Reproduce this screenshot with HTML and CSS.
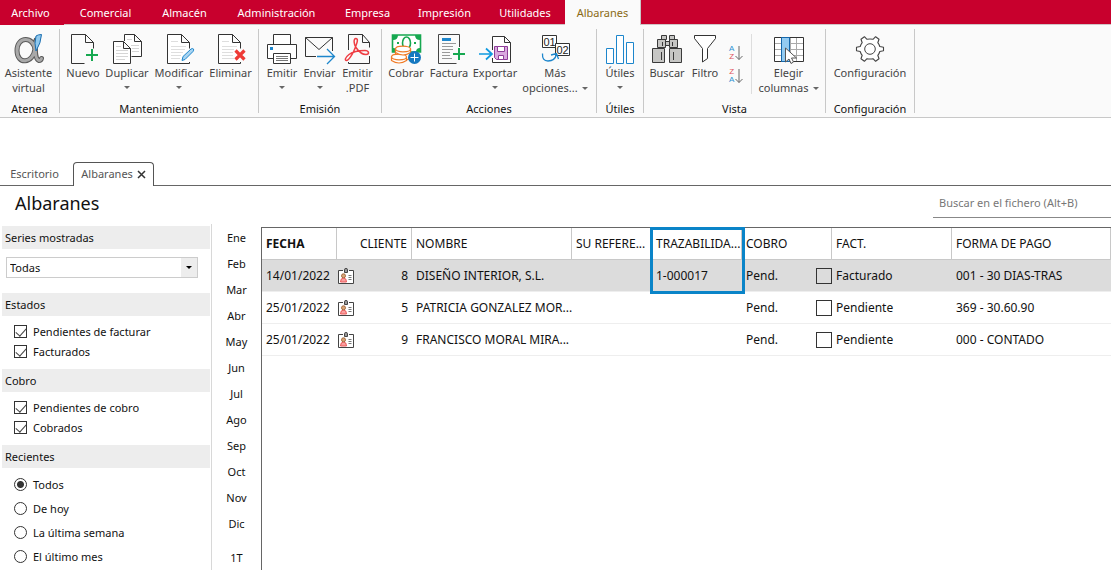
FILE: index.html
```html
<!DOCTYPE html>
<html lang="es">
<head>
<meta charset="utf-8">
<title>Albaranes</title>
<link rel="stylesheet" href="styles.css">
</head>
<body>
<svg class="defs" width="0" height="0" aria-hidden="true">
  <symbol id="card" viewBox="0 0 16 16">
    <path d="M5 2.500H.5v13h15v-13H11" fill="#fff" stroke="#444"/>
    <path d="M6.500 4.500v-3q0-1 1.500-1t1.500 1v3z" fill="#999" stroke="#444"/>
    <path d="M2.500 14q0-4 3-4t3 4z" fill="#f9a0a0" stroke="#ec5a5a"/>
    <circle cx="5.500" cy="7.800" r="2" fill="#d9a679" stroke="#a56a3e"/>
    <path d="M10.500 7.500h3M10.500 9.500h3M10.500 11.500h3" stroke="#777"/>
  </symbol>
</svg>

<nav class="menu">
  <button class="menu-item file">Archivo</button>
  <button class="menu-item">Comercial</button>
  <button class="menu-item">Almacén</button>
  <button class="menu-item">Administración</button>
  <button class="menu-item">Empresa</button>
  <button class="menu-item">Impresión</button>
  <button class="menu-item">Utilidades</button>
  <button class="menu-item active">Albaranes</button>
</nav>

<div class="ribbon">
  <section class="group atenea">
    <div class="tools">
      <button class="tool">
        <svg viewBox="0 0 30 30"><g fill="none" stroke-linecap="round"><path d="M22 6Q20 25 25 26.500q2 0 2.500-2M21 16C20 2 3 2 3 16.500S19 30 21 15" stroke="#5b5b5b" stroke-width="5"/><path d="M22 7Q20 25 25 26.500q2 0 2.500-2M21 16C20 2 3 2 3 16.500S19 30 21 15" stroke="#a9a9a9" stroke-width="3"/></g><path d="M22 2q2-1.500 5.500-1.500Q27 9 22 17q-2-8 0-15z" fill="#8fc8ee" stroke="#1b6fb0"/></svg>
        <span>Asistente<br>virtual</span>
      </button>
    </div>
    <h2>Atenea</h2>
  </section>

  <section class="group mantenimiento">
    <div class="tools">
      <button class="tool">
        <svg viewBox="0 0 30 30"><path d="M16.500 29.500h-13V.5h14l8 8v6M17.500.5v8h8" fill="none" stroke="#333"/><path d="M24 15v12M18 21h12" stroke="#16a850" stroke-width="2"/></svg>
        <span>Nuevo</span>
      </button>
      <button class="tool">
        <svg viewBox="0 0 30 30"><path d="M12.500 7V.5h10l7 7v15h-10M22.500.5v7h7" fill="#fff" stroke="#333"/><path d="M15 5.500h5M19 11.500h8M20 14.500h7M20 17.500h7" stroke="#d5d5d5"/><path d="M1.500 7.500h10l7 7v15h-17zM11.500 7.500v7h7" fill="#fff" stroke="#333"/><path d="M4 12.500h5M4 16.500h12M4 19.500h12M4 22.500h12M4 25.500h9" stroke="#d5d5d5"/></svg>
        <span>Duplicar</span><i class="arrow"></i>
      </button>
      <button class="tool">
        <svg viewBox="0 0 30 30"><path d="M25.500 28v1.500h-22V.5h14l8 8v6M17.500.5v8h8" fill="#fff" stroke="#333"/><path d="M7 7.500h7M7 12.500h15M7 15.500h14M7 18.500h12M7 21.500h10M7 24.500h9" stroke="#dedede"/><path d="M18 26.500l1-4 8-7.500q2-1 2.500 0t-.5 2.500l-8 8z" fill="#a8d4f2" stroke="#1d86cc"/></svg>
        <span>Modificar</span><i class="arrow"></i>
      </button>
      <button class="tool">
        <svg viewBox="0 0 30 30"><path d="M24.500 28v1.500h-22V.5h14l8 8v6M16.500.5v8h8" fill="#fff" stroke="#333"/><path d="M6 7.500h7M6 12.500h15M6 15.500h12M6 18.500h11M6 21.500h11M6 24.500h12" stroke="#dedede"/><path d="M19.500 16.500l9 9M28.500 16.500l-9 9" stroke="#ee3a36" stroke-width="3.200"/></svg>
        <span>Eliminar</span>
      </button>
    </div>
    <h2>Mantenimiento</h2>
  </section>

  <section class="group emision">
    <div class="tools">
      <button class="tool">
        <svg viewBox="0 0 30 30"><path d="M6.500 10.500V.5h17v10M6.500 24.500h-6v-14h29v14h-6M6.500 19.500h17v10h-17z" fill="#fff" stroke="#333"/><path d="M9 22.500h12M9 24.500h12M9 26.500h12" stroke="#777"/><path d="M3 13h3v3H3z" fill="#1d86cc"/></svg>
        <span>Emitir</span><i class="arrow"></i>
      </button>
      <button class="tool">
        <svg viewBox="0 0 30 30"><path d="M11 22.500H.5v-19h27V17M.5 3.500L14 15.500l13.500-12" fill="none" stroke="#333"/><path d="M12 22.500h17.500M22 15l7.500 7.500L22 30" fill="none" stroke="#1d86cc" stroke-width="1.300"/></svg>
        <span>Enviar</span><i class="arrow"></i>
      </button>
      <button class="tool">
        <svg viewBox="0 0 30 30"><path d="M5.500 16V.5h14l7 8v5M26.500 22v7.500h-21V28M19.500.5v8h7" fill="none" stroke="#333"/><path d="M13 4.500c-3 0-2 6 0 9s6 7 10 7 3-4-1-4-12 1-16 4-4.500 6-2.500 6 6-6 8-11 4.500-11 1.500-11z" fill="none" stroke="#ef3d43" stroke-width="1.500"/></svg>
        <span>Emitir<br>.PDF</span>
      </button>
    </div>
    <h2>Emisión</h2>
  </section>

  <section class="group acciones">
    <div class="tools">
      <button class="tool">
        <svg viewBox="0 0 30 30"><path d="M1.500 1h28v17h-28z" fill="#fff" stroke="#16a850" stroke-width="1.600"/><path d="M2 1h5q0 5-5 5zM29 1h-5q0 5 5 5zM2 18h4q0-4-4-4zM29 18h-4q0-4 4-4z" fill="#16a850"/><ellipse cx="15.500" cy="9" rx="4" ry="6" fill="none" stroke="#16a850" stroke-width="1.600"/><path d="M6 9h2M23 9h2" stroke="#16a850" stroke-width="2"/><g fill="#fff" stroke="#f07c28" stroke-width="1.200"><path d="M4.500 21v3q7.500 5 15 0v-9h-15z"/><path d="M.5 23v3.500q7.500 5 15 0V23z"/><ellipse cx="8" cy="23" rx="7.500" ry="2.800"/><path d="M4.500 15v3.500q7.500 5 15 0V15z"/><ellipse cx="12" cy="15" rx="7.500" ry="2.800"/></g><circle cx="23.500" cy="23.500" r="6.500" fill="#1578c0"/><path d="M23.500 19.500v8M19.500 23.500h8" stroke="#fff"/></svg>
        <span>Cobrar</span>
      </button>
      <button class="tool">
        <svg viewBox="0 0 30 30"><path d="M25.500 13V.5h-21v29h18" fill="none" stroke="#444"/><path d="M8 4h9v3H8z" fill="#1d86cc"/><path d="M8 9.500h14M8 12.500h11M8 15.500h11M8 18.500h8M8 21.500h8M8 24.500h10" stroke="#999"/><path d="M25 14v12M19 20h12" stroke="#16a850" stroke-width="2"/></svg>
        <span>Factura</span>
      </button>
      <button class="tool">
        <svg viewBox="0 0 30 30"><path d="M12.500 16V2.500h12l6 6v20h-18V24M24.500 2.500v6h6" fill="#fff" stroke="#333"/><path d="M-1 20h12M6 14.500l6 5.500-6 5.500" fill="none" stroke="#0f9ae0" stroke-width="1.700"/><path d="M14.500 12.500h13v13h-11l-2-2z" fill="#d9a9df" stroke="#8e3d98"/><path d="M17.500 12.500h7v5h-7zM18.500 21.500h5v4h-5z" fill="#fff" stroke="#8e3d98"/></svg>
        <span>Exportar</span><i class="arrow"></i>
      </button>
      <button class="tool">
        <svg viewBox="0 0 30 30"><path d="M2.500 1.500h14v12h-14z" fill="#fff" stroke="#333"/><text x="3.500" y="11.500" class="digits">01</text><path d="M15.500 9.500h14v12h-14z" fill="#fff" stroke="#333"/><text x="16.500" y="19.500" class="digits">02</text><path d="M2.500 19.500Q2 27 8 27q7 0 8.500-7M11 21l5.500-1.500 2 5.500" fill="none" stroke="#1d86cc" stroke-width="1.300"/></svg>
        <span>Más<br>opciones...<i class="arrow inline"></i></span>
      </button>
    </div>
    <h2>Acciones</h2>
  </section>

  <section class="group utiles">
    <div class="tools">
      <button class="tool">
        <svg viewBox="0 0 30 30"><path d="M1.500 14.500h7v15h-7zM11.500 1.500h7v28h-7zM21.500 8.500h7v21h-7z" fill="#fff" stroke="#1d86cc"/></svg>
        <span>Útiles</span><i class="arrow"></i>
      </button>
    </div>
    <h2>Útiles</h2>
  </section>

  <section class="group vista">
    <div class="tools">
      <button class="tool">
        <svg viewBox="0 0 30 30"><path d="M9.500 1.500h5v4h-5zM17.500 1.500h5v4h-5zM5.500 5.500h8v8h-8zM17.500 5.500h8v8h-8zM13.500 7.500h4v4h-4zM.5 14.500h12v14H.5zM17.500 14.500h12v14h-12z" fill="#c6c6c4" stroke="#3a3a3a"/><path d="M9.500 18v8M21.500 18v8M10.500 8v4M20.500 8v4" stroke="#3a3a3a"/></svg>
        <span>Buscar</span>
      </button>
      <button class="tool">
        <svg viewBox="0 0 30 30"><path d="M4.500 1.500h21v3l-8 10v10l-5 3.500V14.500l-8-10z" fill="#fff" stroke="#333"/></svg>
        <span>Filtro</span>
      </button>
      <div class="sorters">
        <button aria-label="Orden ascendente"><span class="letters"><b class="blue">A</b><b class="red">Z</b></span><svg viewBox="0 0 8 16"><path d="M4 1v13.500M.5 11L4 14.500 7.500 11" fill="none" stroke="#666"/></svg></button>
        <button aria-label="Orden descendente"><span class="letters"><b class="red">Z</b><b class="blue">A</b></span><svg viewBox="0 0 8 16"><path d="M4 1v13.500M.5 11L4 14.500 7.500 11" fill="none" stroke="#666"/></svg></button>
      </div>
      <button class="tool">
        <svg viewBox="0 0 30 30"><path d="M.5 3.500h29v24H.5z" fill="#fff"/><path d="M1 9.500h28M1 15.500h28M1 21.500h28M22.500 4v23M16.500 4v23" stroke="#aaa"/><path d="M.5 3.500h29v24H.5z" fill="none" stroke="#333"/><path d="M7.500 3.500h8v24h-8z" fill="#93cbf1" stroke="#1467ac"/><path d="M11.500 14v14l3.500-3 2 4.500 2.500-1.500-2-4h5z" fill="#fff" stroke="#555"/></svg>
        <span>Elegir<br>columnas<i class="arrow inline"></i></span>
      </button>
    </div>
    <h2>Vista</h2>
  </section>

  <section class="group configuracion">
    <div class="tools">
      <button class="tool">
        <svg viewBox="0 0 30 30"><path d="M1.500 13.200L5.200 12.500Q5.800 10.400 7.200 8.700L6 5.200 9.400 2.700 12 5.300Q15 4.600 18 5.300L20.600 2.700 24 5.200 22.800 8.700Q24.200 10.400 24.800 12.500L28.500 13.200V16.800L24.800 17.500Q24.200 19.600 22.800 21.300L24 24.800 20.600 27.300 18 24.700Q15 25.400 12 24.700L9.400 27.300 6 24.800 7.200 21.300Q5.800 19.600 5.200 17.500L1.500 16.800z" fill="#fff" stroke="#444" stroke-width="1.100" stroke-linejoin="round"/><circle cx="15" cy="15" r="5.300" fill="none" stroke="#444"/></svg>
        <span>Configuración</span>
      </button>
    </div>
    <h2>Configuración</h2>
  </section>
</div>

<div class="doc-tabs">
  <button class="doc-tab">Escritorio</button>
  <button class="doc-tab current">Albaranes <svg class="close" viewBox="0 0 9 9"><path d="M1 1l7 7M8 1L1 8" stroke="#333" stroke-width="1.500"/></svg></button>
</div>

<header class="title-bar">
  <h1>Albaranes</h1>
  <input class="search" type="text" placeholder="Buscar en el fichero (Alt+B)" aria-label="Buscar en el fichero">
</header>

<main class="workspace">
  <aside class="filters">
    <section>
      <h3><label for="series">Series mostradas</label></h3>
      <div class="select-box"><select id="series"><option>Todas</option></select></div>
    </section>
    <section>
      <h3>Estados</h3>
      <div class="checks">
        <label><input type="checkbox" checked>Pendientes de facturar</label>
        <label><input type="checkbox" checked>Facturados</label>
      </div>
    </section>
    <section>
      <h3>Cobro</h3>
      <div class="checks">
        <label><input type="checkbox" checked>Pendientes de cobro</label>
        <label><input type="checkbox" checked>Cobrados</label>
      </div>
    </section>
    <section>
      <h3>Recientes</h3>
      <div class="radios">
        <label><input type="radio" name="recent" checked>Todos</label>
        <label><input type="radio" name="recent">De hoy</label>
        <label><input type="radio" name="recent">La última semana</label>
        <label><input type="radio" name="recent">El último mes</label>
      </div>
    </section>
  </aside>

  <nav class="months">
    <button>Ene</button><button>Feb</button><button>Mar</button><button>Abr</button>
    <button>May</button><button>Jun</button><button>Jul</button><button>Ago</button>
    <button>Sep</button><button>Oct</button><button>Nov</button><button>Dic</button>
    <button class="quarter">1T</button>
  </nav>

  <div class="grid-panel">
    <table>
      <colgroup><col class="c-date"><col class="c-client"><col class="c-name"><col class="c-ref"><col class="c-trace"><col class="c-paid"><col class="c-inv"><col></colgroup>
      <thead>
        <tr><th class="sorted">FECHA</th><th class="num">CLIENTE</th><th>NOMBRE</th><th>SU REFERE...</th><th class="marked">TRAZABILIDA...</th><th>COBRO</th><th>FACT.</th><th>FORMA DE PAGO</th></tr>
      </thead>
      <tbody>
        <tr class="selected"><td>14/01/2022</td><td class="client"><div><svg class="card"><use href="#card"/></svg>8</div></td><td>DISEÑO INTERIOR, S.L.</td><td></td><td>1-000017</td><td class="paid"><div>Pend.<input type="checkbox" aria-label="Facturado"></div></td><td>Facturado</td><td>001 - 30 DIAS-TRAS</td></tr>
        <tr><td>25/01/2022</td><td class="client"><div><svg class="card"><use href="#card"/></svg>5</div></td><td>PATRICIA GONZALEZ MOR...</td><td></td><td></td><td class="paid"><div>Pend.<input type="checkbox" aria-label="Facturado"></div></td><td>Pendiente</td><td>369 - 30.60.90</td></tr>
        <tr><td>25/01/2022</td><td class="client"><div><svg class="card"><use href="#card"/></svg>9</div></td><td>FRANCISCO MORAL MIRA...</td><td></td><td></td><td class="paid"><div>Pend.<input type="checkbox" aria-label="Facturado"></div></td><td>Pendiente</td><td>000 - CONTADO</td></tr>
      </tbody>
    </table>
  </div>
</main>
</body>
</html>
```
FILE: styles.css
```css
* { box-sizing: border-box; }

body {
  margin: 0;
  min-height: 100vh;
  display: flex;
  flex-direction: column;
  background: #fff;
  color: #111;
  font: 11px/15px "Noto Sans", "Open Sans", sans-serif;
}

button, input, select {
  font: inherit;
  color: inherit;
}

button {
  padding: 0;
  border: 0;
  background: none;
  white-space: nowrap;
}

h1, h2, h3 { margin: 0; font-weight: 400; }

.defs { position: absolute; }

/* Menu bar */
.menu {
  display: grid;
  grid-template-columns: 62px 87px 71px 113px 69px 85px 76px 78px 1fr;
  height: 25px;
  background: linear-gradient(#c8002d, #c8002d) 0 0 / 64px 100% no-repeat,
    linear-gradient(#c8002d 24px, #d0c4c6 24px);
}

.menu { grid-template-columns: 64px 83px 75px 109px 73px 81px 80px 76px 1fr; }

.menu-item { color: #fff; }
.menu-item.file { padding-right: 3px; }

.menu-item.active {
  background: #fafafa;
  border-right: 1px solid #c8c8c8;
  color: #8a6a14;
}

/* Ribbon */
.ribbon {
  display: flex;
  padding: 4px 0;
  background: #fafafa;
  border-bottom: 1px solid #c8c8c8;
}

.group {
  display: flex;
  flex-direction: column;
  border-right: 1px solid #c8c8c8;
}

.group h2 {
  height: 12px;
  font-size: 11px;
  text-align: center;
}

.tools {
  display: grid;
  height: 72px;
  padding-top: 5px;
}

.atenea .tools { grid-template-columns: 57px; padding-right: 2px; }
.mantenimiento .tools { grid-template-columns: 38px 50px 54px 49px; padding-left: 4px; padding-right: 3px; }
.emision .tools { grid-template-columns: 38px 37px 39px; padding-left: 4px; padding-right: 4px; }
.acciones .tools { grid-template-columns: 42px 44px 48px 72px; padding-left: 3px; padding-right: 5px; }
.utiles .tools { grid-template-columns: 46px; }
.vista .tools { grid-template-columns: 40px 36px 29px 73px; padding-left: 3px; }
.configuracion .tools { grid-template-columns: 88px; }

.tool {
  display: flex;
  flex-direction: column;
  align-items: center;
  color: #444;
}

.tool > svg {
  width: 30px;
  height: 30px;
  margin-bottom: 1px;
  overflow: visible;
}

.arrow {
  border: 3px solid transparent;
  border-top-color: #666;
  border-bottom: 0;
  margin-top: 6px;
}

.arrow.inline {
  display: inline-block;
  margin: 0 0 2px 4px;
}

.digits { font: 11px "Liberation Sans", sans-serif; fill: #222; }

.sorters {
  display: flex;
  flex-direction: column;
  gap: 7px;
  height: 60px;
  padding: 11px 0 0 6px;
  border-right: 1px solid #ddd;
}

.sorters button {
  display: flex;
  gap: 1px;
  width: 16px;
  height: 16px;
}

.sorters svg { width: 8px; height: 16px; }

.letters {
  display: flex;
  flex-direction: column;
  font: 8px/8px "Liberation Sans", sans-serif;
}

.letters b { font-weight: 400; }
.letters .blue { color: #2e93d4; }
.letters .red { color: #e0525c; }

/* Document tabs */
.doc-tabs {
  display: flex;
  align-items: flex-end;
  height: 68px;
  box-shadow: inset 0 -1px #666;
}

.doc-tab {
  width: 73px;
  height: 24px;
  padding: 0 4px 2px 0;
  color: #555;
}

.doc-tab.current {
  width: 81px;
  padding: 0 0 2px;
  background: #fff;
  border: 1px solid #555;
  border-bottom: 0;
  border-radius: 4px 4px 0 0;
}

.close { width: 9px; height: 9px; vertical-align: -1px; margin-left: 1px; }

.title-bar {
  display: flex;
  justify-content: space-between;
  align-items: flex-start;
  height: 38px;
  padding-left: 15px;
}

h1 {
  padding-top: 4px;
  font-size: 18px;
  line-height: 26px;
}

.search {
  width: 178px;
  height: 32px;
  padding: 1px 6px 0;
  border: 0;
  border-bottom: 1px solid #888;
  background: none;
  outline: 0;
}

.search::placeholder { color: #777; opacity: 1; }

/* Workspace */
.workspace { display: flex; flex: 1; }

.filters {
  flex: 0 0 212px;
  padding: 2px 1px 0 2px;
  border-right: 1px solid #d8d8d8;
}

.filters h3 {
  height: 23px;
  padding-left: 3px;
  background: #ededed;
  font-size: 11px;
  line-height: 23px;
}

.select-box {
  position: relative;
  margin: 8px 12px 15px 4px;
}

.select-box select {
  display: block;
  width: 100%;
  height: 21px;
  padding: 0 3px;
  appearance: none;
  border: 1px solid #ccc;
  border-radius: 0;
  background: linear-gradient(#ededed, #ededed) 100% 0 / 16px 100% no-repeat #fff;
}

.select-box::after {
  content: "";
  position: absolute;
  right: 6px;
  top: 9px;
  border: 3px solid transparent;
  border-top-color: #000;
  border-bottom: 0;
}

.checks, .radios { display: flex; flex-direction: column; padding-left: 12px; }
.checks { padding-top: 5px; padding-bottom: 8px; }
.radios { padding-top: 4px; }
.checks label, .radios label { display: flex; align-items: center; gap: 6px; }
.checks label { height: 20px; }
.radios label { height: 24px; }

input[type="checkbox"], input[type="radio"] {
  appearance: none;
  flex: none;
  width: 13px;
  height: 13px;
  margin: 0;
  border: 1px solid #333;
}

input[type="radio"] { border-radius: 50%; }
input[type="radio"]:checked { background: radial-gradient(circle, #333 3px, #fff 4px); }

.checks input:checked::before {
  content: "";
  display: block;
  width: 9px;
  height: 5px;
  margin: 2px 0 0 1px;
  border: solid #444;
  border-width: 0 0 1px 1px;
  transform: rotate(-48deg);
}

.months {
  flex: 0 0 49px;
  display: flex;
  flex-direction: column;
}

.months button { height: 26px; }
.months .quarter { margin-top: 8px; }

.grid-panel {
  flex: 1;
  min-width: 0;
  margin-top: 3px;
  border: solid #666;
  border-width: 1px 0 0 1px;
}

table {
  width: 100%;
  table-layout: fixed;
  border-collapse: separate;
  border-spacing: 0;
  font-size: 12px;
}

.c-date, .c-client { width: 75px; }
.c-name { width: 160px; }
.c-ref { width: 80px; }
.c-trace, .c-paid { width: 90px; }
.c-inv { width: 120px; }

th, td {
  height: 32px;
  padding: 0 4px;
  text-align: left;
  white-space: nowrap;
  font-weight: 400;
  border-bottom: 1px solid #eee;
}

th { border-bottom-color: #c8c8c8; border-right: 1px solid #c8c8c8; }
th.sorted { font-weight: 700; }
th.num { text-align: right; }

.selected td { background: #dcdcdc; }

.client > div, .paid > div {
  display: flex;
  align-items: center;
  justify-content: space-between;
}

td.client { padding-left: 1px; }
td.paid { padding-right: 0; }
.paid input { width: 16px; height: 16px; }
.card { width: 16px; height: 16px; }

/* Frame over the traceability header and first value */
.marked { position: relative; }

.marked::after {
  content: "";
  position: absolute;
  z-index: 1;
  inset: -1px -4px -35px -2px;
  border: 3px solid #0a84c8;
}
```
